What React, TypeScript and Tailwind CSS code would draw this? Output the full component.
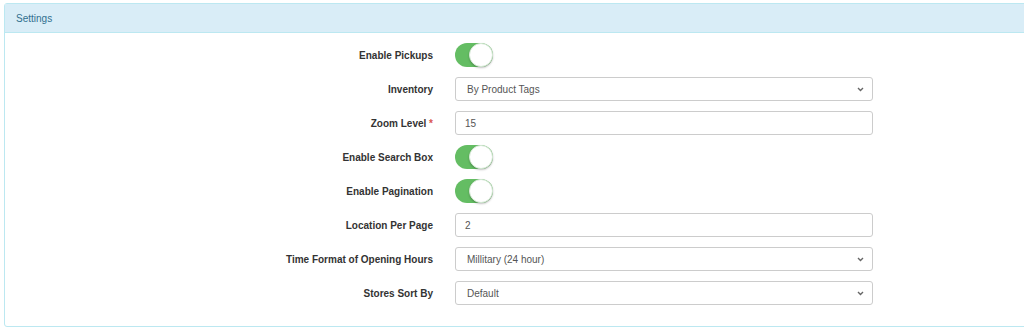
import React from "react";

const font = { fontFamily: '"Liberation Sans", Arial, sans-serif' };

function Toggle() {
  return (
    <div className="relative w-[38px] h-[24px] rounded-full bg-[#64bd63]">
      <div className="absolute right-0 top-0 w-[24px] h-[24px] rounded-full bg-white border border-[#d6e9d6] shadow-[0_1px_2px_rgba(0,0,0,0.25)]" />
    </div>
  );
}

function Select({ value }: { value: string }) {
  return (
    <div className="w-[418px] h-[24px] border border-[#cccccc] rounded-[3px] bg-white flex items-center justify-between pl-[11px] pr-[8px] text-[10px] text-[#555]">
      <span>{value}</span>
      <svg width="7" height="5" viewBox="0 0 7 5" className="mt-[1px]">
        <path d="M1 1 L3.5 3.5 L6 1" stroke="#666" strokeWidth="1.4" fill="none" />
      </svg>
    </div>
  );
}

function Input({ value }: { value: string }) {
  return (
    <div className="w-[418px] h-[24px] border border-[#cccccc] rounded-[3px] bg-white flex items-center pl-[9px] text-[10px] text-[#555]">
      {value}
    </div>
  );
}

function Row({ label, req, children }: { label: string; req?: boolean; children: React.ReactNode }) {
  return (
    <div className="flex items-center h-[24px]">
      <div className="w-[428px] text-right text-[10px] font-bold text-[#333]">
        {label}
        {req && <span className="text-[#d9534f]"> *</span>}
      </div>
      <div className="ml-[22px]">{children}</div>
    </div>
  );
}

export default function App() {
  return (
    <div className="w-[1024px] h-[331px] bg-white overflow-hidden pt-[3px] pl-[4px]" style={font}>
      <div className="w-[1040px] border border-[#bce8f1] rounded-[3px]">
        <div className="h-[29px] bg-[#d9edf7] border-b border-[#bce8f1] flex items-center pl-[11px] text-[10px] text-[#31708f]">
          Settings
        </div>
        <div className="pt-[10px] pb-[21px] flex flex-col gap-[10px]">
          <Row label="Enable Pickups"><Toggle /></Row>
          <Row label="Inventory"><Select value="By Product Tags" /></Row>
          <Row label="Zoom Level" req><Input value="15" /></Row>
          <Row label="Enable Search Box"><Toggle /></Row>
          <Row label="Enable Pagination"><Toggle /></Row>
          <Row label="Location Per Page"><Input value="2" /></Row>
          <Row label="Time Format of Opening Hours"><Select value="Millitary (24 hour)" /></Row>
          <Row label="Stores Sort By"><Select value="Default" /></Row>
        </div>
      </div>
    </div>
  );
}
